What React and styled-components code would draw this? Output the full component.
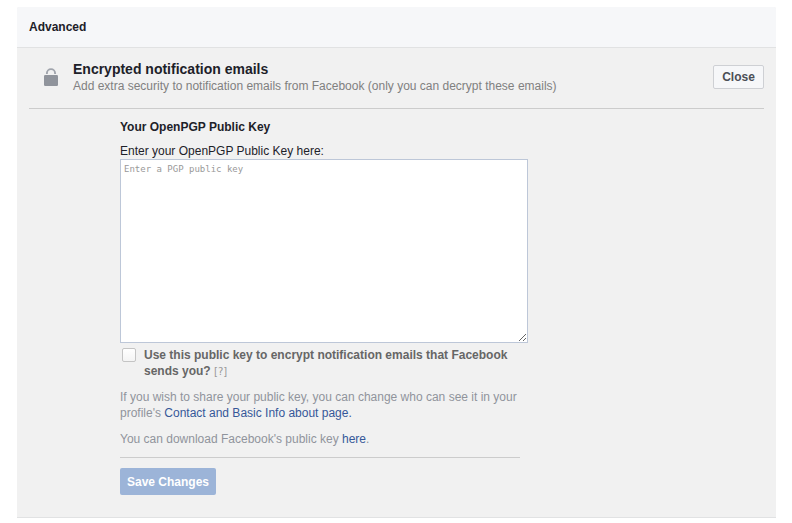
import { useState } from "react";
import { createGlobalStyle, styled } from "styled-components";

export default function App() {
  const [publicKey, setPublicKey] = useState("");
  const [encrypt, setEncrypt] = useState(false);

  return (
    <>
      <GlobalStyle />
      <S_panel>
        <S_panelHeader>Advanced</S_panelHeader>
        <S_section>
          <S_sectionHead>
            <LockIcon />
            <S_headText>
              <h2>Encrypted notification emails</h2>
              <p>
                Add extra security to notification emails from Facebook (only
                you can decrypt these emails)
              </p>
            </S_headText>
            <S_closeButton type="button">Close</S_closeButton>
          </S_sectionHead>
          <S_form onSubmit={(e) => e.preventDefault()}>
            <S_formTitle>Your OpenPGP Public Key</S_formTitle>
            <S_fieldLabel htmlFor="public-key">
              Enter your OpenPGP Public Key here:
            </S_fieldLabel>
            <S_keyInput
              id="public-key"
              placeholder="Enter a PGP public key"
              spellCheck={false}
              value={publicKey}
              onChange={(e) => setPublicKey(e.target.value)}
            />
            <S_checkRow>
              <S_checkbox
                id="encrypt"
                type="checkbox"
                checked={encrypt}
                onChange={(e) => setEncrypt(e.target.checked)}
              />
              <div>
                <label htmlFor="encrypt">
                  Use this public key to encrypt notification emails that
                  Facebook sends you?
                </label>{" "}
                <S_helpLink href="#help">[?]</S_helpLink>
              </div>
            </S_checkRow>
            <S_note>
              If you wish to share your public key, you can change who can see
              it in your profile&apos;s{" "}
              <S_link href="#about">Contact and Basic Info about page.</S_link>
            </S_note>
            <S_note>
              You can download Facebook&apos;s public key{" "}
              <S_link href="#download">here</S_link>.
            </S_note>
            <S_actions>
              <S_saveButton type="submit" disabled={!publicKey}>
                Save Changes
              </S_saveButton>
            </S_actions>
          </S_form>
        </S_section>
      </S_panel>
    </>
  );
}

function LockIcon() {
  return (
    <S_lock viewBox="0 0 14 18" aria-hidden="true">
      <path
        d="M2.9 6V5.2a4.1 4.1 0 0 1 8.2 0V6"
        fill="none"
        stroke="#a0a4ac"
        strokeWidth="1.9"
      />
      <rect y="7" width="14" height="11" rx="1.2" fill="#90949c" />
    </S_lock>
  );
}

const GlobalStyle = createGlobalStyle`
  * {
    box-sizing: border-box;
  }
  body {
    margin: 0;
    background: #fff;
    color: #1d2129;
    font-family: "Liberation Sans", Arial, sans-serif;
    font-size: 12px;
    line-height: 16px;
  }
  h2, h3, p {
    margin: 0;
  }
  button {
    font-family: inherit;
    font-size: 12px;
    font-weight: bold;
    border-radius: 2px;
  }
`;

const S_panel = styled.main`
  margin: 7px 16px 0 17px;
  background: #f1f1f1;
  border-bottom: 1px solid #e1e2e3;
  border-radius: 2px 2px 0 0;
  overflow: hidden;
`;

const S_panelHeader = styled.header`
  padding: 12px;
  background: #f6f7f9;
  border-bottom: 1px solid #e1e2e3;
  font-weight: bold;
`;

const S_section = styled.section`
  padding: 0 12px 22px;
`;

const S_sectionHead = styled.div`
  display: flex;
  align-items: center;
  gap: 15px;
  padding: 12px 0 14px 15px;
  border-bottom: 1px solid #ccc;
`;

const S_lock = styled.svg`
  flex: none;
  width: 14px;
  height: 18px;
`;

const S_headText = styled.div`
  flex: 1;
  h2 {
    font-size: 14px;
    line-height: 18px;
  }
  p {
    color: #808080;
  }
`;

const S_closeButton = styled.button`
  width: 51px;
  height: 24px;
  padding: 0;
  border: 1px solid #ced0d4;
  background: #f6f7f9;
  color: #4b4f56;
`;

const S_form = styled.form`
  max-width: 491px;
  padding: 10px 0 0 91px;
`;

const S_formTitle = styled.h3`
  font-size: 12px;
`;

const S_fieldLabel = styled.label`
  display: block;
  margin-top: 8px;
`;

/* text lines up with the column, padding and border hang out on the right */
const S_keyInput = styled.textarea`
  display: block;
  box-sizing: content-box;
  width: 100%;
  height: 176px;
  padding: 3px;
  border: 1px solid #bdc7d8;
  border-radius: 0;
  background: #fff;
  color: #1d2129;
  font-family: "DejaVu Sans Mono", monospace;
  font-size: 9px;
  line-height: 12px;
  &::placeholder {
    color: #999;
  }
`;

const S_checkRow = styled.div`
  display: flex;
  align-items: flex-start;
  gap: 8px;
  margin-top: 4px;
  padding-left: 2px;
  color: #666;
  font-weight: bold;
`;

const S_checkbox = styled.input`
  flex: none;
  appearance: none;
  width: 14px;
  height: 14px;
  margin: 1px 0 0;
  border: 1px solid #c4c4c4;
  border-radius: 2px;
  background: linear-gradient(#fff, #f4f4f4);
  &:checked {
    background: #4267b2;
  }
`;

const S_helpLink = styled.a`
  color: #999;
  font-family: "DejaVu Sans", sans-serif;
  font-size: 10px;
  font-weight: normal;
  line-height: 12px;
  text-decoration: none;
`;

const S_note = styled.p`
  margin-top: 10px;
  color: #90949c;
`;

const S_link = styled.a`
  color: #365899;
  text-decoration: none;
  &:hover {
    text-decoration: underline;
  }
`;

const S_actions = styled.div`
  margin-top: 10px;
  padding-top: 10px;
  border-top: 1px solid #ccc;
`;

const S_saveButton = styled.button`
  display: block;
  width: 96px;
  height: 27px;
  padding: 0;
  border: none;
  background: #4267b2;
  color: #fff;
  &:disabled {
    background: #9cb4d8;
  }
`;
